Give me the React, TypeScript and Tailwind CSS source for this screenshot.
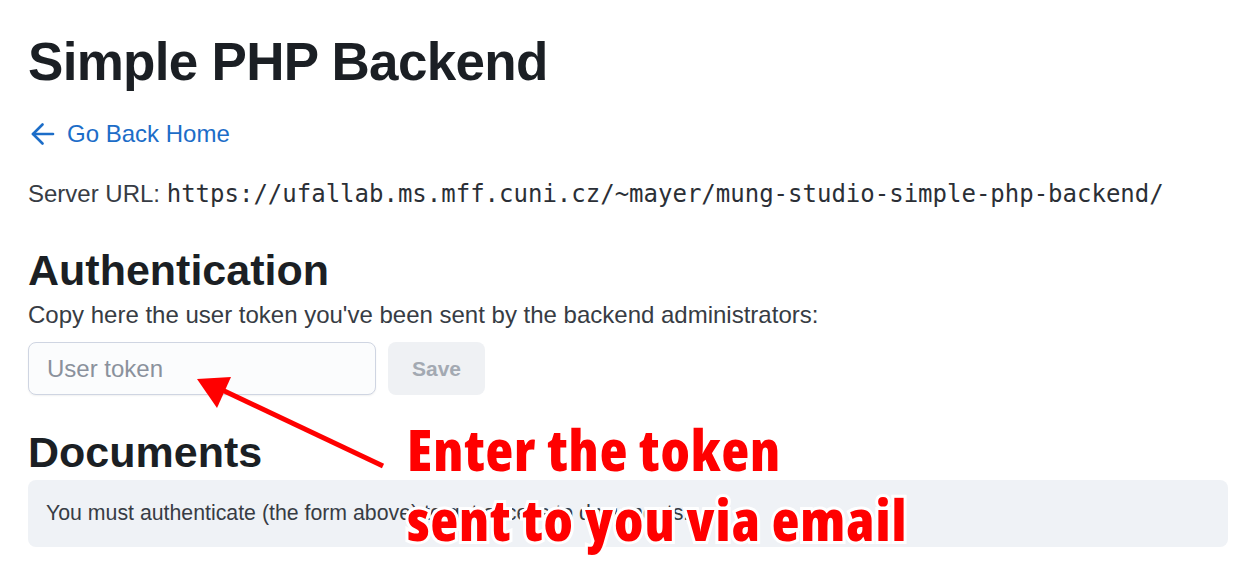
import React from "react";

export default function App() {
  return (
    <div className="relative w-[1260px] h-[584px] overflow-hidden bg-white [font-family:'Liberation_Sans',Arial,sans-serif] text-[#373c44]">
      <div className="flex flex-col pl-[28px] pr-[32px] pt-[31px]">
        <h1 className="text-[53px] leading-[62px] font-bold text-[#1b1f24] tracking-[-0.7px]">
          Simple PHP Backend
        </h1>
        <a className="mt-[24px] flex items-center gap-[12px] text-[24px] leading-[34px] text-[#1c6dc8] w-max" href="#">
          <svg width="24" height="22" viewBox="0 0 24 22" fill="none" stroke="currentColor" strokeWidth="2.6" strokeLinecap="round" strokeLinejoin="round" className="ml-[3px]">
            <path d="M22 11H2" />
            <path d="M11.5 1.5L2 11l9.5 9.5" />
          </svg>
          <span>Go Back Home</span>
        </a>
        <p className="mt-[26px] text-[24px] leading-[34px]">
          Server URL:{" "}
          <code className="[font-family:'DejaVu_Sans_Mono',monospace] text-[24px] text-[#2b2f36]">
            https://ufallab.ms.mff.cuni.cz/~mayer/mung-studio-simple-php-backend/
          </code>
        </p>
        <h2 className="mt-[33px] text-[43px] leading-[52px] font-bold text-[#1b1f24]">
          Authentication
        </h2>
        <p className="mt-[2px] text-[24px] leading-[34px]">
          Copy here the user token you've been sent by the backend administrators:
        </p>
        <div className="mt-[10px] flex gap-[12px]">
          <input
            placeholder="User token"
            className="w-[348px] h-[53px] rounded-[8px] border border-[#cfd5e2] bg-[#fbfcfd] px-[18px] text-[24px] text-[#373c44] placeholder:text-[#8a919c] shadow-[0_1px_2px_rgba(0,0,0,0.06)] outline-none"
          />
          <button className="w-[97px] h-[53px] rounded-[8px] bg-[#eff1f4] text-[21px] font-bold text-[#a3a9b2]">
            Save
          </button>
        </div>
        <h2 className="mt-[31px] text-[43px] leading-[52px] font-bold text-[#1b1f24]">
          Documents
        </h2>
        <div className="mt-[2px] h-[67px] rounded-[8px] bg-[#eff2f6] px-[18px] flex items-center text-[21.3px]">
          You must authenticate (the form above) to get access to documents.
        </div>
      </div>

      <svg className="absolute left-0 top-0 pointer-events-none" width="1260" height="584">
        <line x1="383" y1="466" x2="218" y2="388" stroke="#ff0000" strokeWidth="5" />
        <polygon points="197,379 231,377 217,408" fill="#ff0000" />
      </svg>
      <div className="absolute left-[407px] top-[414px] flex flex-col text-[#ff0000] font-extrabold text-[57px] leading-[70px] tracking-[1px] [font-family:'Open_Sans',sans-serif] [font-stretch:75%] [paint-order:stroke_fill] [-webkit-text-stroke:6px_white]">
        <span>Enter the token</span>
        <span>sent to you via email</span>
      </div>
    </div>
  );
}
